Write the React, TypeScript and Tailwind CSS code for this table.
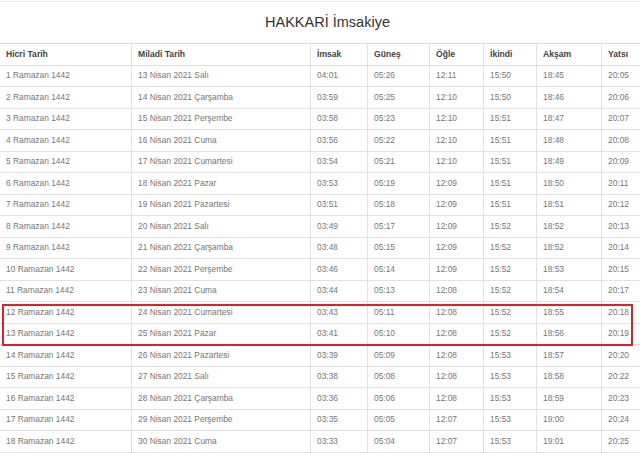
const rows: string[][] = [
  ["1 Ramazan 1442", "13 Nisan 2021 Salı", "04:01", "05:26", "12:11", "15:50", "18:45", "20:05"],
  ["2 Ramazan 1442", "14 Nisan 2021 Çarşamba", "03:59", "05:25", "12:10", "15:50", "18:46", "20:06"],
  ["3 Ramazan 1442", "15 Nisan 2021 Perşembe", "03:58", "05:23", "12:10", "15:51", "18:47", "20:07"],
  ["4 Ramazan 1442", "16 Nisan 2021 Cuma", "03:56", "05:22", "12:10", "15:51", "18:48", "20:08"],
  ["5 Ramazan 1442", "17 Nisan 2021 Cumartesi", "03:54", "05:21", "12:10", "15:51", "18:49", "20:09"],
  ["6 Ramazan 1442", "18 Nisan 2021 Pazar", "03:53", "05:19", "12:09", "15:51", "18:50", "20:11"],
  ["7 Ramazan 1442", "19 Nisan 2021 Pazartesi", "03:51", "05:18", "12:09", "15:51", "18:51", "20:12"],
  ["8 Ramazan 1442", "20 Nisan 2021 Salı", "03:49", "05:17", "12:09", "15:52", "18:52", "20:13"],
  ["9 Ramazan 1442", "21 Nisan 2021 Çarşamba", "03:48", "05:15", "12:09", "15:52", "18:52", "20:14"],
  ["10 Ramazan 1442", "22 Nisan 2021 Perşembe", "03:46", "05:14", "12:09", "15:52", "18:53", "20:15"],
  ["11 Ramazan 1442", "23 Nisan 2021 Cuma", "03:44", "05:13", "12:08", "15:52", "18:54", "20:17"],
  ["12 Ramazan 1442", "24 Nisan 2021 Cumartesi", "03:43", "05:11", "12:08", "15:52", "18:55", "20:18"],
  ["13 Ramazan 1442", "25 Nisan 2021 Pazar", "03:41", "05:10", "12:08", "15:52", "18:56", "20:19"],
  ["14 Ramazan 1442", "26 Nisan 2021 Pazartesi", "03:39", "05:09", "12:08", "15:53", "18:57", "20:20"],
  ["15 Ramazan 1442", "27 Nisan 2021 Salı", "03:38", "05:08", "12:08", "15:53", "18:58", "20:22"],
  ["16 Ramazan 1442", "28 Nisan 2021 Çarşamba", "03:36", "05:06", "12:08", "15:53", "18:59", "20:23"],
  ["17 Ramazan 1442", "29 Nisan 2021 Perşembe", "03:35", "05:05", "12:07", "15:53", "19:00", "20:24"],
  ["18 Ramazan 1442", "30 Nisan 2021 Cuma", "03:33", "05:04", "12:07", "15:53", "19:01", "20:25"],
];

const headers = ["Hicri Tarih", "Miladi Tarih", "İmsak", "Güneş", "Öğle", "İkindi", "Akşam", "Yatsı"];

const cols = "grid grid-cols-[132px_179px_57px_62px_54px_53px_65px_53px]";

export default function App() {
  return (
    <div className="relative w-[640px] h-[453px] overflow-hidden bg-white font-['Liberation_Sans',Arial,sans-serif]">
      <div className="w-[655px] mt-px border-t border-[#e8e8e8]">
        {/* başlık */}
        <div className="h-[41px] flex items-center justify-center text-[14.5px] text-[#333]">
          HAKKARİ İmsakiye
        </div>

        {/* tablo */}
        <div className="border-t border-[#dddddd]">
          <div className={`${cols} h-[21.5px] border-b-[1.5px] border-[#dddddd] text-[8.6px] font-bold text-[#444]`}>
            {headers.map((h, i) => (
              <div key={i} className="flex items-center pl-[6px] border-r border-[#e2e2e2]">
                {h}
              </div>
            ))}
          </div>
          {rows.map((r, i) => (
            <div key={i} className={`${cols} h-[21.5px] border-b border-[#e2e2e2] text-[8.4px] text-[#777]`}>
              {r.map((c, j) => (
                <div key={j} className="flex items-center pl-[6px] border-r border-[#e2e2e2]">
                  {c}
                </div>
              ))}
            </div>
          ))}
        </div>
      </div>

      {/* kırmızı çerçeve */}
      <div className="absolute left-[2px] top-[304px] w-[631px] h-[42px] border-2 border-[#d8232a]" />
    </div>
  );
}
